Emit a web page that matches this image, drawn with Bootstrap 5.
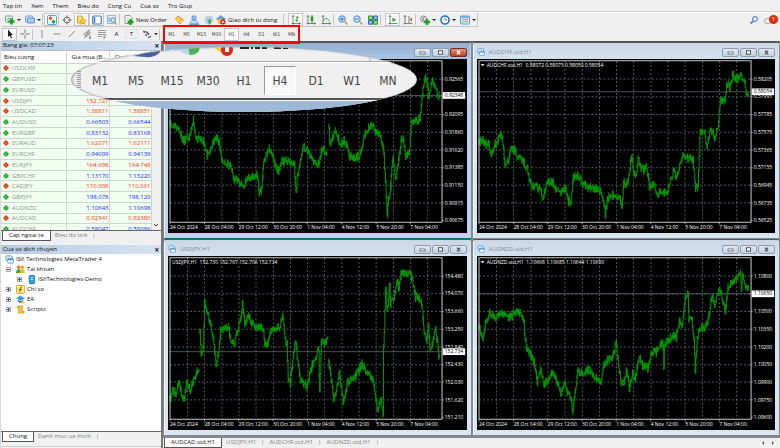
<!DOCTYPE html>
<html lang="vi">
<head>
<meta charset="utf-8">
<meta name="viewport" content="width=device-width, initial-scale=1">
<title>MetaTrader 4</title>
<link href="https://cdn.jsdelivr.net/npm/bootstrap@5.3.0/dist/css/bootstrap.min.css" rel="stylesheet">
<style>
body{font:6px/8px "Open Sans","Noto Sans",sans-serif;background:#f0f0f0;color:#111;overflow:hidden}
button{border:0;background:none;padding:0;color:inherit;font:inherit}
.menu-bar{height:12px;border-bottom:1px solid #d0d0d0;padding-left:3px;gap:9px}
.menu-bar a{color:#111;text-decoration:none}
.tool-bar{height:15px;padding-left:2px}
.main-tools{border-top:1px solid #fff}
.tools-inner{border-bottom:1px solid #c8c8c8;border-right:1px solid #c8c8c8}
.draw-bar{height:14px}
.tool{width:15px;height:13px;display:flex;align-items:center;justify-content:center;flex:none}
.tool svg,.wide-tool svg{width:10px;height:10px;flex:none}
.tool.on{background:#f9f9f9;border:1px solid #c6c6c6}
.drop{width:5px;flex:none;display:flex;align-items:center}
.drop::before{content:"";border:2px solid transparent;border-top-color:#222;border-bottom:0}
.sep{width:5px;height:11px;flex:none;border-left:1px solid #c4c4c4;margin:0}
.sep.thin{width:2px}
.wide-tool{display:flex;align-items:center;gap:2px;flex:none;white-space:nowrap}
.order{width:47px}
.auto{width:67px}
.frames{outline:2px solid #f00;outline-offset:-1px;height:17px;position:relative;z-index:3}
.frames .tool{font:5px/8px "DejaVu Sans Condensed","DejaVu Sans",sans-serif;color:#444}
.bell{position:relative}
.count{position:absolute;right:-2px;top:1px;width:9px;height:9px;border-radius:50%;background:#e02b0e;color:#fff;font-size:6px;line-height:9px;text-align:center}
.side{width:161px;flex:none;border-left:1px solid #d8d8d8}
.pane-title{height:9px;background:linear-gradient(90deg,#b5cae0,#d6e3f1);color:#111;padding:0 2px}
.pane-title button{line-height:8px;font-size:8px;font-weight:700}
.quotes{height:180px;overflow:hidden;border-top:1px solid #bbb;background:#f0f0f0}
.quotes table{height:184px;border-collapse:collapse;table-layout:fixed;background:#f0fff0;width:150px;flex:none}
.quotes th,.quotes td{padding:0;line-height:8px;border-right:1px solid #cfd4cf;border-bottom:1px solid #cfd4cf;white-space:nowrap;overflow:hidden;vertical-align:middle}
.quotes th{background:#fff;height:12px;font-weight:400;padding-left:5px}
.quotes th:first-child{padding-left:3px}
.quotes td{text-align:right;color:#2020ff}
.quotes td:first-child{text-align:left;color:#8f938f}
.quotes .down td{color:#ff2e10}
.quotes .down td:first-child{color:#8f938f}
.quotes td svg{width:6px;height:6px;margin:0 3px 0 2px;vertical-align:-1px}
.tabs-row{height:11px;border-top:1px solid #666;color:#808080;padding-left:1px}
.tabs-row button{padding:0 6px 1px;border-right:1px solid transparent;height:10px;line-height:9px}
.tabs-row .rest::after{content:"|";margin-left:5px;color:#777}
.tabs-row button.rest{padding-right:0;padding-left:4px}
.tabs-row .current{background:#fff;color:#111;border:1px solid #555;border-top:0}
.tree{background:#fff;flex:1 1 auto;margin:0;padding:0 0 0 4px;list-style:none;white-space:nowrap}
.tree li{height:10px;display:flex;align-items:center;gap:2px}
.tree svg{width:9px;height:9px;flex:none}
.node{width:5px;height:5px;border:1px solid #a0a8b0;background:linear-gradient(#3b4f7a,#3b4f7a) center/3px 1px no-repeat,#fff;margin:0 3px 0 1px}
.node.plus{background:linear-gradient(#3b4f7a,#3b4f7a) center/3px 1px no-repeat,linear-gradient(#3b4f7a,#3b4f7a) center/1px 3px no-repeat,#fff}
.desk{border-left:2px solid #777;border-top:1px solid #555;background:#8d8d8d;min-width:0}
.desk-grid{display:grid;grid-template-columns:1fr 1fr}
.win{background:#d9e5f3;border:1px solid #808890;border-top-color:#555;border-radius:3px 3px 0 0;padding:0 4px 5px;box-shadow:inset 1px 1px #f3f8fd}
.win-head{height:16px;color:#848b94;padding-top:2px;background:linear-gradient(#cbd7e5,#d3e0ee);margin:0 -3px;padding-left:3px;padding-right:3px}
.win.active{background:#bcd4ee;border-bottom-color:#00707a}
.win.active .win-head{background:linear-gradient(#93adcd,#a9c4e2)}
.win-head svg.app{width:8px;height:8px}
.win-ctl{gap:1px}
.win-btn{width:17px;height:9px;border:1px solid #8f9cab;border-radius:2px;background:linear-gradient(#dfe8f2,#c3d0df);display:flex;align-items:center;justify-content:center}
.win-btn svg{width:7px;height:5px}
.win.active .shut{background:linear-gradient(#e09a8c,#c03c22);border-color:#7c2a1c}
.plot{display:block;width:100%;height:auto;background:#000}
.plot text{font-size:15px;fill:#fff}
.chart-tabs{height:12px;background:#f0f0f0;border-top:2px solid #888}
.foot{height:2px;border-top:1px solid #ccc}
.lens{position:absolute;left:71px;top:47px;width:346px;height:65px;border-radius:50%;overflow:hidden;background:#f0f0f0;z-index:2;box-shadow:inset 1px 0 2px #888}
.lens-top{height:15px;border-bottom:1px solid #aaa}
.lens-top svg{display:block;width:346px;height:14px}
.lens-row{height:36px;padding-left:6px;border-top:1px solid #fff;gap:4px;font:12px/14px "DejaVu Sans Condensed","DejaVu Sans",sans-serif;color:#444}
.lens-row button{width:32px;height:29px}
.lens-row .held{background:#f8f8f8;border:1px solid #999;border-right-color:#fff;border-bottom-color:#fff}
.grip{width:4px;height:20px;background:repeating-linear-gradient(#999 0 1px,#eee 1px 2px);margin-right:-1px}
.lens-end{height:14px;border-top:2px solid #555;background:linear-gradient(#fff 0 1px,#9eb9d8 1px)}
</style>
<script src="https://cdn.jsdelivr.net/npm/bootstrap@5.3.0/dist/js/bootstrap.bundle.min.js"></script>
</head>
<body class="d-flex flex-column min-vh-100">
<svg width="0" height="0" class="position-absolute" aria-hidden="true">
<defs>
<symbol id="app" viewBox="0 0 10 10"><rect x="1" y="1" width="7" height="5" rx="1" fill="#eaf4ff" stroke="#4b93dc"/><rect x="3" y="4" width="6.500" height="5" rx="1" fill="#fff" stroke="#4b93dc"/><path d="M3 5h6" stroke="#4b93dc" stroke-width="1.500"/></symbol>
<symbol id="newchart" viewBox="0 0 10 10"><rect x=".5" y="1" width="7" height="6" rx="1" fill="#e9f3e9" stroke="#7ca08a"/><path d="M2 5l2-2 2 1" stroke="#5a8" fill="none"/><path d="M6.500 3.500v6M3.500 6.500h6" stroke="#14a51c" stroke-width="2.600"/></symbol>
<symbol id="wins" viewBox="0 0 10 10"><rect x=".5" y="1" width="7" height="6" rx="1" fill="#d6eafc" stroke="#6aa0d4"/><rect x="2.500" y="3" width="7" height="5" rx="1" fill="#a8cdf0" stroke="#5a90c8"/></symbol>
<symbol id="market" viewBox="0 0 10 10"><rect x=".5" y=".5" width="9" height="9" rx="1" fill="#eef6ff" stroke="#5f9ad0"/><path d="M3.500 1.200l2 2-2 2-2-2z" fill="#e84420"/><path d="M6.500 4.500l2.200 2.200-2.200 2.200-2.200-2.200z" fill="#1faa2c"/></symbol>
<symbol id="target" viewBox="0 0 10 10"><circle cx="5" cy="5" r="3" fill="none" stroke="#777"/><path d="M5 .5v3M5 6.500v3M.5 5h3M6.500 5h3" stroke="#666"/></symbol>
<symbol id="folder" viewBox="0 0 10 10"><path d="M.5 1h4l1 1v6h-5z" fill="#ffe07a" stroke="#c89a30"/><path d="M6 3l1 2 2.500.300-1.800 1.600.5 2.600L6 8.200 3.800 9.500l.4-2.600-1.700-1.600L5 5z" fill="#ffca28" stroke="#d08e10" stroke-width=".6"/></symbol>
<symbol id="panel" viewBox="0 0 10 10"><rect x=".7" y="1" width="8.600" height="8" rx="1" fill="#fff" stroke="#3c7cc4" stroke-width="1.200"/><path d="M2.500 2v6" stroke="#3c7cc4" stroke-width="1.500"/></symbol>
<symbol id="tester" viewBox="0 0 10 10"><rect x=".5" y=".5" width="8" height="8" fill="#e6eef6" stroke="#a4b8cc"/><path d="M2 2v5M4 3v3" stroke="#6a9"/><circle cx="6" cy="5" r="2.200" fill="#dff0ff" stroke="#4a8cc8"/><path d="M7.500 7l2 2.500" stroke="#d39b30" stroke-width="1.400"/></symbol>
<symbol id="order" viewBox="0 0 10 10"><path d="M1 .5h5l2 2v6H1z" fill="#fff" stroke="#999"/><path d="M2 3h4M2 5h3" stroke="#aaa" stroke-width=".6"/><path d="M6.500 4v6M3.500 7h6" stroke="#14a51c" stroke-width="2.400"/></symbol>
<symbol id="editor" viewBox="0 0 10 10"><path d="M1 4l3-3 5.500 4L6 9z" fill="#ffc43a" stroke="#b97d12" stroke-width=".7"/><path d="M1 4l5 4 3.500-3" fill="none" stroke="#fff1b4" stroke-width=".6"/></symbol>
<symbol id="person" viewBox="0 0 10 10"><circle cx="5" cy="3" r="2.200" fill="#8cc6f4" stroke="#3b87ce" stroke-width=".7"/><path d="M1 9c0-5 8-5 8 0z" fill="#c3e0f8" stroke="#3b87ce" stroke-width=".7"/><path d="M0 9.300h10" stroke="#4a8cc8"/></symbol>
<symbol id="signal" viewBox="0 0 10 10"><circle cx="5" cy="5" r="4" fill="none" stroke="#a8c8e8"/><circle cx="5" cy="5" r="2.200" fill="none" stroke="#5fa0dc"/><path d="M4 4.500h3v3l-2 2.500z" fill="#35b040"/></symbol>
<symbol id="auto" viewBox="0 0 10 10"><path d="M.5 4l4-3.500 5 3.500-3 2z" fill="#5fa0dc" stroke="#3b77ae" stroke-width=".5"/><path d="M1 5l4-1.500 2 4-4 2z" fill="#ffc43a"/><circle cx="6.900" cy="6.900" r="2.600" fill="#e0281a"/><rect x="6" y="6" width="1.800" height="1.800" fill="#fff"/></symbol>
<symbol id="bars" viewBox="0 0 10 10"><path d="M2 .5v9M.5 8.500h9M.8 2L2 .5 3.200 2M8 7.300l1.500 1.200L8 9.700" fill="none" stroke="#666" stroke-width=".8"/><path d="M6 1v6M4.500 5.500H6M6 2.500h1.500" stroke="#14a51c" fill="none"/></symbol>
<symbol id="candle" viewBox="0 0 10 10"><path d="M2 .5v9M.5 8.500h9M.8 2L2 .5 3.200 2M8 7.300l1.500 1.200L8 9.700" fill="none" stroke="#666" stroke-width=".8"/><path d="M6 0v8" stroke="#14a51c"/><rect x="4.700" y="1.500" width="2.600" height="4.500" fill="#14a51c"/></symbol>
<symbol id="linec" viewBox="0 0 10 10"><path d="M2 .5v9M.5 8.500h9M.8 2L2 .5 3.200 2M8 7.300l1.500 1.200L8 9.700" fill="none" stroke="#666" stroke-width=".8"/><path d="M2.500 6c2-4 3-3 6 0" stroke="#14a51c" fill="none"/></symbol>
<symbol id="zin" viewBox="0 0 10 10"><circle cx="4" cy="4" r="3.200" fill="#e0f1ff" stroke="#2c86d8"/><path d="M4 2v4M2 4h4" stroke="#2c6ec0"/><path d="M6.500 6.500l3 3" stroke="#d8a236" stroke-width="1.600"/></symbol>
<symbol id="zout" viewBox="0 0 10 10"><circle cx="4" cy="4" r="3.200" fill="#e0f1ff" stroke="#2c86d8"/><path d="M2 4h4" stroke="#2c6ec0"/><path d="M6.500 6.500l3 3" stroke="#d8a236" stroke-width="1.600"/></symbol>
<symbol id="tile" viewBox="0 0 10 10"><path d="M.5 1h4v3.600h-4zM5.500 5.500h4v3.700h-4z" fill="#8fdc60" stroke="#2e9a20"/><path d="M5.500 1h4v3.600h-4zM.5 5.500h4v3.700h-4z" fill="#8fbcf5" stroke="#2a5fb8"/></symbol>
<symbol id="scroll" viewBox="0 0 10 10"><path d="M2 .5v9M.5 8.500h9M.8 2L2 .5 3.200 2" fill="none" stroke="#666" stroke-width=".8"/><path d="M4.500 2.500v4.500l3.500-2.200z" fill="#14a51c"/></symbol>
<symbol id="shift" viewBox="0 0 10 10"><path d="M2 .5v9M.5 8.500h9M.8 2L2 .5 3.200 2M6 1v7" fill="none" stroke="#666" stroke-width=".8"/><path d="M9 2.500v4L6.700 4.500z" fill="#d0522a"/></symbol>
<symbol id="indi" viewBox="0 0 10 10"><circle cx="3.500" cy="4" r="3" fill="#eee" stroke="#888"/><path d="M3 6V3l1.500-.5" stroke="#666" fill="none"/><path d="M7 4v6M4 7h6" stroke="#14a51c" stroke-width="2.400"/></symbol>
<symbol id="clock" viewBox="0 0 10 10"><circle cx="5" cy="5" r="4" fill="#fff" stroke="#1d74d2" stroke-width="1.600"/><path d="M5 2.500V5h2" stroke="#555" stroke-width=".8" fill="none"/></symbol>
<symbol id="templ" viewBox="0 0 10 10"><rect x=".5" y="1" width="9" height="8" rx="1" fill="#e3f1fd" stroke="#5c9bd6"/><path d="M.5 2h9" stroke="#5c9bd6" stroke-width="1.400"/><path d="M2 5l2-1 2 1 2-1.500" stroke="#d9624a" fill="none"/><path d="M2 7.500l2-1 2 .6 2-1" stroke="#3a6" fill="none" stroke-width=".8"/></symbol>
<symbol id="find" viewBox="0 0 10 10"><circle cx="6" cy="4" r="2.400" fill="#fff" stroke="#2c62d0"/><path d="M4 6L1.500 8.500" stroke="#2c62d0" stroke-width="1.500"/></symbol>
<symbol id="chat" viewBox="0 0 10 10"><ellipse cx="4" cy="6" rx="3.500" ry="2.800" fill="#eee" stroke="#aaa"/></symbol>
<symbol id="cursor" viewBox="0 0 10 10"><path d="M3 .5v7.500l1.800-1.600 1.200 3 1.100-.5-1.200-2.800h2z" fill="#222"/></symbol>
<symbol id="cross" viewBox="0 0 10 10"><path d="M5 .5v3.700M5 5.800v3.700M.5 5h3.700M5.800 5h3.700" stroke="#777"/></symbol>
<symbol id="vl" viewBox="0 0 10 10"><path d="M5 1v8" stroke="#777" stroke-width=".8"/></symbol>
<symbol id="hl" viewBox="0 0 10 10"><path d="M1.500 5h7" stroke="#777" stroke-width=".8"/></symbol>
<symbol id="dl" viewBox="0 0 10 10"><path d="M2 8l6-6" stroke="#666" stroke-width=".8"/></symbol>
<symbol id="chan" viewBox="0 0 10 10"><path d="M1 6l6-5M2 9l7-6M3 4.500l2 3M5 3l2 3M3 8L8 1M7 7h2M7 8.200h2M7 9.400h2" stroke="#666" stroke-width=".7"/></symbol>
<symbol id="fibo" viewBox="0 0 10 10"><path d="M1 1.500h8M1 3.500h8M1 5.500h8M1 7.500h4M7 7v3M7 7h2M7 8.500h1.500" stroke="#777" stroke-width=".7"/></symbol>
<symbol id="shapes" viewBox="0 0 10 10"><path d="M1 1.500l2.500 1L2 4.500zM3 5l2.500 1L4 7.500z" fill="#333"/><path d="M4 2.500l3 3M6 8.500l3-1" stroke="#444" stroke-width="1.200"/></symbol>
<symbol id="up" viewBox="0 0 10 10"><path d="M5 0l5 5-5 5-5-5z" fill="#1aa324"/><circle cx="5" cy="5" r="1.300" fill="#a8e8a8"/></symbol>
<symbol id="dn" viewBox="0 0 10 10"><path d="M5 0l5 5-5 5-5-5z" fill="#d83416"/><circle cx="5" cy="5" r="1.300" fill="#ffb898"/></symbol>
<symbol id="users" viewBox="0 0 10 10"><circle cx="3" cy="2.500" r="2" fill="#b98a1a"/><path d="M0 9c0-6 6-6 6 0z" fill="#3fa73c"/><circle cx="7" cy="2.500" r="2" fill="#d6a427"/><path d="M4.300 9c0-6 5.500-6 5.500 0z" fill="#e9b730"/></symbol>
<symbol id="server" viewBox="0 0 10 10"><rect x="2.500" y=".5" width="6" height="9" rx="1" fill="#2f9be8" stroke="#1b6fb8"/><path d="M4 3h3M4 5h3" stroke="#d5eeff"/></symbol>
<symbol id="fx" viewBox="0 0 10 10"><rect x=".5" y=".5" width="9" height="9" rx="1" fill="#ffe680" stroke="#c9a227"/><path d="M6.500 2.500q-1.500-.5-1.700 1.500L4.200 8M3.300 5h3" stroke="#6b5210" fill="none"/></symbol>
<symbol id="ea" viewBox="0 0 10 10"><path d="M0 4l5-3.500L10 4 5 6.500z" fill="#3f97dd"/><path d="M2 5.500v2q3 2 6 0v-2L5 7z" fill="#2a72b4"/><circle cx="8" cy="8" r="1.700" fill="#ffcc33"/></symbol>
<symbol id="script" viewBox="0 0 10 10"><path d="M2 1h6l-1 2v4h2v2H2l1-2V3H1z" fill="#f4c430" stroke="#c0921a" stroke-width=".7"/></symbol>
</defs>
</svg>

<nav class="menu-bar d-flex align-items-center" aria-label="Menu">
<a href="#">Tap tin</a><a href="#">Xem</a><a href="#">Them</a><a href="#">Bieu do</a><a href="#">Cong Cu</a><a href="#">Cua so</a><a href="#">Tro Giup</a>
</nav>

<div class="tool-bar main-tools d-flex align-items-center justify-content-between">
<div class="tools-inner d-flex align-items-center">
<button class="tool" aria-label="New chart"><svg><use href="#newchart"/></svg></button><span class="drop"></span>
<button class="tool" aria-label="Profiles"><svg><use href="#wins"/></svg></button><span class="drop"></span>
<span class="sep thin"></span>
<button class="tool on" aria-label="Market watch"><svg><use href="#market"/></svg></button>
<button class="tool" aria-label="Data window"><svg><use href="#target"/></svg></button>
<button class="tool on" aria-label="Navigator"><svg><use href="#folder"/></svg></button>
<button class="tool on" aria-label="Terminal"><svg><use href="#panel"/></svg></button>
<button class="tool" aria-label="Tester"><svg><use href="#tester"/></svg></button>
<span class="sep"></span>
<button class="wide-tool order"><svg><use href="#order"/></svg>New Order</button>
<button class="tool" aria-label="Editor"><svg><use href="#editor"/></svg></button>
<button class="tool" aria-label="Account"><svg><use href="#person"/></svg></button>
<button class="tool" aria-label="Signals"><svg><use href="#signal"/></svg></button>
<button class="wide-tool auto"><svg><use href="#auto"/></svg>Giao dich tu dong</button>
<span class="sep"></span>
<button class="tool on" aria-label="Bar chart"><svg><use href="#bars"/></svg></button>
<button class="tool" aria-label="Candlesticks"><svg><use href="#candle"/></svg></button>
<button class="tool" aria-label="Line chart"><svg><use href="#linec"/></svg></button>
<span class="sep thin"></span>
<button class="tool" aria-label="Zoom in"><svg><use href="#zin"/></svg></button>
<button class="tool" aria-label="Zoom out"><svg><use href="#zout"/></svg></button>
<button class="tool" aria-label="Tile"><svg><use href="#tile"/></svg></button>
<span class="sep"></span>
<button class="tool on" aria-label="Auto scroll"><svg><use href="#scroll"/></svg></button>
<button class="tool" aria-label="Chart shift"><svg><use href="#shift"/></svg></button>
<span class="sep thin"></span>
<button class="tool" aria-label="Indicators"><svg><use href="#indi"/></svg></button><span class="drop"></span>
<button class="tool" aria-label="Periods"><svg><use href="#clock"/></svg></button><span class="drop"></span>
<button class="tool" aria-label="Templates"><svg><use href="#templ"/></svg></button><span class="drop"></span>
</div>
<div class="d-flex pe-1">
<button class="tool" aria-label="Search"><svg><use href="#find"/></svg></button>
<button class="tool bell" aria-label="Messages"><svg><use href="#chat"/></svg><span class="count">1</span></button>
</div>
</div>

<div class="tool-bar draw-bar d-flex align-items-center">
<button class="tool on" aria-label="Cursor"><svg><use href="#cursor"/></svg></button>
<button class="tool" aria-label="Crosshair"><svg><use href="#cross"/></svg></button>
<span class="sep thin"></span>
<button class="tool" aria-label="Vertical line"><svg><use href="#vl"/></svg></button>
<button class="tool" aria-label="Horizontal line"><svg><use href="#hl"/></svg></button>
<button class="tool" aria-label="Trendline"><svg><use href="#dl"/></svg></button>
<button class="tool" aria-label="Channel"><svg><use href="#chan"/></svg></button>
<button class="tool" aria-label="Fibonacci"><svg><use href="#fibo"/></svg></button>
<button class="tool">A</button>
<button class="tool"><span class="border px-1">T</span></button>
<button class="tool" aria-label="Arrows"><svg><use href="#shapes"/></svg></button><span class="drop"></span>
<span class="sep"></span>
<div class="frames d-flex align-items-center">
<button class="tool">M1</button><button class="tool">M5</button><button class="tool">M15</button><button class="tool">M30</button><button class="tool on">H1</button><button class="tool">H4</button><button class="tool">D1</button><button class="tool">W1</button><button class="tool">MN</button>
</div>
</div>

<main class="d-flex flex-grow-1">
<aside class="side d-flex flex-column">
<div class="pane-title d-flex justify-content-between"><span>Bang gia: 07:07:23</span><button aria-label="Close">×</button></div>
<div class="quotes d-flex">
<table>
<colgroup><col style="width:65px"><col style="width:43px"><col style="width:42px"></colgroup>
<thead><tr><th>Bieu tuong</th><th>Gia mua (B...</th><th>Gia ban (...</th></tr></thead>
<tbody id="rates"></tbody>
</table>
<div class="flex-fill d-flex align-items-end justify-content-center"><svg width="6" height="8" viewBox="0 0 6 8"><path d="M1 2l2 2 2-2" stroke="#333" fill="none"/></svg></div>
</div>
<div class="tabs-row d-flex"><button class="current">Cap ngoai te</button><button class="rest">Bieu do tick</button></div>
<div class="pane-title d-flex justify-content-between mt-1"><span>Cua so dich chuyen</span><button aria-label="Close">×</button></div>
<ul class="tree">
<li><svg><use href="#app"/></svg>IS6 Technologies MetaTrader 4</li>
<li><span class="node"></span><svg><use href="#users"/></svg>Tai khoan</li>
<li class="ps-2"><span class="node plus ms-1"></span><svg><use href="#server"/></svg>IS6Technologies-Demo</li>
<li><span class="node plus"></span><svg><use href="#fx"/></svg>Chi so</li>
<li><span class="node plus"></span><svg><use href="#ea"/></svg>EA</li>
<li><span class="node plus"></span><svg><use href="#script"/></svg>Scripts</li>
</ul>
<div class="tabs-row d-flex"><button class="current">Chung</button><button class="rest">Danh muc ua thich</button></div>
<div class="foot mt-1"></div>
</aside>

<section class="desk d-flex flex-column flex-fill">
<div class="desk-grid" id="desk"></div>
<div class="chart-tabs d-flex justify-content-between">
<div class="tabs-row border-top-0 d-flex"><button class="current">AUDCAD.std,H1</button><button class="rest">USDJPY,H1</button><button class="rest">AUDCHF.std,H1</button><button class="rest">AUDNZD.std,H1</button></div>
<div class="d-flex align-items-center gap-1 pe-1"><svg width="6" height="6" viewBox="0 0 6 6"><path d="M4 1L2 3l2 2z" fill="#555"/></svg><svg width="6" height="6" viewBox="0 0 6 6"><path d="M2 1l2 2-2 2z" fill="#555"/></svg></div>
</div>
<div class="flex-fill bg-light"></div>
</section>
</main>

<div class="lens">
<div class="lens-top"><svg viewBox="0 0 346 14"><path d="M62 9q10-2 27-8v4q-4 6-15 5z" fill="#4a66a0"/><path d="M105 0q8 9 17 8l3-8z" fill="#bcd3ee"/><path d="M117 0h12q-1 8-10 8z" fill="#4cb050"/><path d="M142 0l12 8 6-8z" fill="#f5c63c"/><circle cx="156" cy="3" r="6" fill="#dc2a1c"/><rect x="154" y="0" width="4" height="5" fill="#fff"/><path d="M169 0h9v2h-9zM180 0h2v2h-2zM184 0h5v2h-5zM191 0h5v2h-5zM203 0h7v2h-7zM212 0h5v2h-5z" fill="#222"/><path d="M299 8v6" stroke="#aaa"/></svg></div>
<div class="lens-row d-flex align-items-center">
<span class="grip"></span>
<button>M1</button><button>M5</button><button>M15</button><button>M30</button><button>H1</button><button class="held">H4</button><button>D1</button><button>W1</button><button>MN</button>
</div>
<div class="lens-end"></div>
</div>

<script>
const rates = [
 ['USDCHF','','',1],['GBPUSD','','',0],['EURUSD','','',0],['USDJPY','152.727','',1],
 ['USDCAD','1.38811','1.38851',1],['AUDUSD','0.66503','0.66544',0],['EURGBP','0.83132','0.83168',0],
 ['EURAUD','1.62071','1.62111',1],['EURCHF','0.94099','0.94139',0],['EURJPY','164.698','164.748',1],
 ['GBPCHF','1.13170','1.13220',0],['CADJPY','110.008','110.061',1],['GBPJPY','198.078','198.129',0],
 ['AUDNZD','1.10643','1.10698',0],['AUDCAD','0.92341','0.92380',1],['AUDCHF','0.58047','0.58086',0]];
document.getElementById('rates').innerHTML = rates.map(r =>
 `<tr class="${r[3] ? 'down' : 'rise'}"><td><svg><use href="#${r[3] ? 'dn' : 'up'}"/></svg>${r[0]}</td><td>${r[1]}</td><td>${r[2]}</td></tr>`).join('');

const days = ['24 Oct 2024','28 Oct 04:00','29 Oct 12:00','30 Oct 20:00','1 Nov 04:00','4 Nov 12:00','5 Nov 20:00','7 Nov 04:00'];
// Each series is a list of x,y points; "|" marks a weekend gap.
const charts = [
 {title:'', head:'', active:true, price:'0.92348', at:166,
  axis:['0.92565','','0.92095','0.91860','0.91620','0.91385','0.91150','0.90915','0.90675'],
  line:'31,255 45,258 55,270 65,285 72,302 80,295 88,290 95,262 101,235 106,280 113,300 122,290 132,305 142,348 150,325 160,305 170,292 178,305 185,360 195,370 210,378 220,415 235,420 250,440 258,415 270,412 285,410 290,395 297,458 303,452 310,365 318,350 328,322 338,350 345,375 355,395 365,365 385,358 395,375 402,375 407,460 412,400 420,370 427,320 440,325 450,345 460,372 475,370 483,330 490,325 500,355|506,255 508,310 515,295 525,270 530,285 540,315 550,300 560,320 567,350 580,350 595,350 605,320 615,280 628,258 635,255 645,270 660,290 668,320 675,430 680,518 684,480 690,440 697,345 705,415 712,370 722,300 728,300 735,350 745,340 752,250 765,245 778,235 785,160 793,102 800,140 805,170 815,115 825,150 832,175 836,162'},
 {title:'AUDCHF.std,H1', head:'AUDCHF.std,H1  0.58072 0.58075 0.58050 0.58054', mark:true, price:'0.58054', at:155,
  axis:['0.58205','0.57995','0.57785','0.57575','0.57365','0.57155','0.56945','0.56735','0.56525'],
  line:'31,310 40,298 50,310 60,310 68,345 80,310 90,295 96,280 102,310 108,375 118,360 125,330 135,325 145,345 155,350 165,365 175,385 185,430 200,440 212,445 220,475 235,430 250,425 260,445 275,455 290,445 298,485 305,480 312,415 325,400 340,430 355,440 370,445 385,445 395,455 402,470 408,520 415,475 430,465 440,470 450,470 458,495 463,425 475,430 482,380 487,350 493,395 502,400 506,355 515,390 530,380 540,435 552,430 565,460 580,455 595,450 605,415 612,395 620,410 630,380 640,345 655,355 670,355 678,445 685,430 692,270 705,280 712,325 722,265 735,290 745,260 752,180 765,180 772,130 780,145 790,100 800,120 815,105 825,125 830,160 836,155'},
 {title:'USDJPY,H1', head:'USDJPY,H1  152.730 152.767 152.706 152.734', price:'152.734', at:343,
  axis:['154.480','154.070','153.660','153.250','152.840','152.430','152.030','151.620','151.210'],
  line:'31,490 38,460 50,465 57,430 65,470 72,490 80,440 90,455 100,430 112,400 118,395|120,285 124,350 130,330 134,200 145,230 152,265 160,300 168,380 175,350 182,275 205,270 212,310 222,325 235,270 243,240 247,200 254,260 265,240 280,265 300,265 310,280 315,330 325,310 330,280 345,275 360,265 367,235 375,310 380,320 384,430 390,435 400,350 405,310 412,370 420,430 430,440 440,445 450,400 465,360 475,335 478,460 483,320 495,320 503,300|505,375 512,420 520,485 530,450 537,410 548,490 560,440 570,425 585,415 595,400 605,380 615,400 630,415 640,445 650,515 660,480 667,522 669,330 675,150 680,220 687,140 690,200 700,180 710,130 715,160 722,102 732,115 745,98 755,130 765,180 775,180 783,200 790,290 797,310 803,270 808,335 815,320 822,275 830,310 834,362 837,340'},
 {title:'AUDNZD.std,H1', head:'AUDNZD.std,H1  1.10668 1.10685 1.10644 1.10650', mark:true, price:'1.10650', at:170,
  axis:['1.10800','','1.10500','1.10350','1.10200','1.10050','1.09900','1.09750','1.09600'],
  line:'31,275 42,300 50,265 62,225 75,240 90,230 105,230 120,240 135,230 155,225 163,245 172,330 185,350 195,375 205,430 215,400 225,440 238,430 250,405 262,430 275,470 287,430 295,465 305,480 311,518 318,470 325,400 345,410 360,395 375,420 395,430 402,390 415,365 430,360 440,320 448,380 455,435 465,430 472,395 480,455 490,400 497,425 510,360 520,385 535,390 547,345 560,345 575,320 581,325 583,400 585,320 605,300 620,300 630,250 637,270 645,200 655,155 658,250 667,240 673,310 677,395 683,300 690,275 710,265 720,225 727,170 735,210 747,155 757,175 767,220 775,150 790,130 800,130 812,100 815,150 820,115 828,150 836,160'}
];

// Turns the sparse series into hourly bars with a small repeatable jitter.
function bars(line, seed) {
  let s = seed;
  const rnd = () => (s = (s * 16807) % 2147483647) / 2147483647;
  return line.split('|').map(part => {
    const p = part.split(' ').map(q => q.split(',').map(Number));
    let d = '', prev = p[0][1];
    for (let i = 0; i < p.length - 1; i++) {
      const [x1, y1] = p[i], [x2, y2] = p[i + 1];
      for (let x = x1; x < x2; x += 1.9) {
        const y = y1 + (y2 - y1) * (x - x1) / (x2 - x1) + (rnd() - .5) * 20;
        const a = Math.min(y, prev) - rnd() * 8, b = Math.max(y, prev) + rnd() * 8;
        d += `M${x.toFixed(1)} ${a.toFixed(1)}V${b.toFixed(1)}`;
        prev = y;
      }
    }
    return d;
  }).join('');
}

function plot(c, n) {
  let g = '', t = '';
  for (let i = 0; i < 15; i++) g += `M${83 + Math.round(i * 51.3)} 63V545`;
  for (let i = 0; i < 8; i++) g += `M31 ${117 + Math.round(i * 52.9)}H844`;
  c.axis.forEach((v, i) => {
    const y = 117 + Math.round(i * 52.9);
    t += `<path d="M844 ${y}h5" stroke="#ddd" stroke-width="2"/><text x="852" y="${y + 5}">${v}</text>`;
  });
  days.forEach((v, i) => {
    const x = 31 + Math.round(i * 102.6);
    t += `<path d="M${x} 545v6" stroke="#ddd" stroke-width="2"/><text x="${x}" y="565">${v}</text>`;
  });
  const hx = c.mark ? 54 : 37;
  return `<svg class="plot" viewBox="25 57 892 520" role="img" aria-label="${c.title}">
  <path d="${g}" stroke="#778899" stroke-width="2" stroke-dasharray="6 6" fill="none"/>
  <path d="M31 ${c.at}H844" stroke="#6a7c8c" stroke-width="2"/>
  <path d="${bars(c.line, 97 + n * 31)}" stroke="#009400" stroke-width="3" fill="none"/>
  <path d="M31 62H844V545H31z" stroke="#c8c8c8" stroke-width="3" fill="none"/>
  ${t}
  ${c.mark ? '<path d="M36 72h11l-5 7z" fill="#fff"/>' : ''}<text x="${hx}" y="80" xml:space="preserve">${c.head}</text>
  <rect x="846" y="${c.at - 10}" width="67" height="20" fill="#fff"/><text x="852" y="${c.at + 5}" style="fill:#000">${c.price}</text></svg>`;
}

document.getElementById('desk').innerHTML = charts.map((c, n) => `
<article class="win ${c.active ? 'active' : ''}">
<div class="win-head d-flex align-items-center">
<span class="d-flex align-items-center gap-1 me-auto"><svg class="app"><use href="#app"/></svg>${c.title}</span>
<span class="win-ctl d-flex">
<button class="win-btn" aria-label="Minimize"><svg viewBox="0 0 7 5"><rect x="1" y="2" width="5" height="2" fill="#fff" stroke="#555" stroke-width=".7"/></svg></button>
<button class="win-btn" aria-label="Maximize"><svg viewBox="0 0 7 5"><rect x="1.500" y=".7" width="4" height="3.500" fill="#fff" stroke="#555"/></svg></button>
<button class="win-btn shut" aria-label="Close"><svg viewBox="0 0 7 5"><path d="M2 .7l3 3.600M5 .7L2 4.300" stroke="${c.active ? '#fff' : '#555'}" stroke-width="1.300"/></svg></button>
</span></div>${plot(c, n)}</article>`).join('');
</script>
</body>
</html>
